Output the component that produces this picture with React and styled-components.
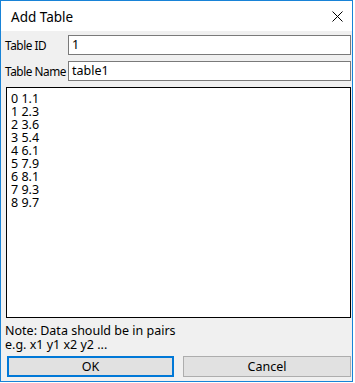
import React from "react";
import styled, { createGlobalStyle } from "styled-components";

const GlobalStyle = createGlobalStyle`
  html, body {
    margin: 0;
    padding: 0;
    background: #ffffff;
  }
  body {
    font-family: "Segoe UI", "Noto Sans", "Liberation Sans", sans-serif;
    font-size: 12.5px;
    color: #000000;
  }
`;

const Window = styled.div`
  width: 353px;
  height: 382px;
  box-sizing: border-box;
  border: 1px solid #1883d7;
  background: #f0f0f0;
  display: flex;
  flex-direction: column;
`;

const TitleBar = styled.div`
  height: 30px;
  flex: none;
  background: #ffffff;
  display: flex;
  align-items: center;
  justify-content: space-between;
  padding: 0 7px 0 10px;
`;

const Title = styled.span`
  font-size: 13.5px;
  line-height: 16px;
  padding-top: 1px;
`;

const CloseButton = styled.div`
  width: 12px;
  height: 12px;
  display: flex;
  align-items: center;
  justify-content: center;
  margin-right: 2px;
`;

const Body = styled.div`
  flex: 1;
  display: flex;
  flex-direction: column;
  padding: 4px 1px 0 4px;
`;

const FieldRow = styled.div`
  display: flex;
  align-items: center;
  height: 20px;
  margin-bottom: 6px;
`;

const Label = styled.label`
  width: 63px;
  flex: none;
  font-size: 11.8px;
  line-height: 14px;
  white-space: nowrap;
  letter-spacing: -0.45px;
`;

const Input = styled.div`
  flex: 1;
  height: 20px;
  box-sizing: border-box;
  border: 1px solid #7a7a7a;
  background: #ffffff;
  padding: 0 3px;
  line-height: 18px;
`;

const DataArea = styled.div`
  margin-left: 1px;
  height: 231px;
  box-sizing: border-box;
  border: 1px solid #000000;
  background: #ffffff;
  padding: 4px 4px;
  line-height: 13px;
  white-space: pre;
`;

const Note = styled.div`
  margin-top: 6px;
  display: flex;
  flex-direction: column;
`;

const NoteLine = styled.div`
  line-height: 14px;
  height: 14px;
`;

const ButtonRow = styled.div`
  display: flex;
  gap: 9px;
  margin-top: 4px;
  padding-left: 2px;
  padding-right: 1px;
`;

const Button = styled.div`
  flex: none;
  width: ${p => p.$width}px;
  height: 21px;
  box-sizing: border-box;
  background: #e1e1e1;
  border: ${p => (p.$primary ? "2px solid #0078d7" : "1px solid #adadad")};
  display: flex;
  align-items: center;
  justify-content: center;
`;

const rows = [
  "0 1.1",
  "1 2.3",
  "2 3.6",
  "3 5.4",
  "4 6.1",
  "5 7.9",
  "6 8.1",
  "7 9.3",
  "8 9.7"
];

const App = () => {
  return (
    <>
      <GlobalStyle />
      <Window>
        <TitleBar>
          <Title>Add Table</Title>
          <CloseButton>
            <svg width="11" height="11" viewBox="0 0 11 11">
              <path d="M0.5 0.5 L10.5 10.5 M10.5 0.5 L0.5 10.5" stroke="#000" strokeWidth="1" />
            </svg>
          </CloseButton>
        </TitleBar>
        <Body>
          <FieldRow>
            <Label>Table ID</Label>
            <Input>1</Input>
          </FieldRow>
          <FieldRow>
            <Label>Table Name</Label>
            <Input>table1</Input>
          </FieldRow>
          <DataArea>{rows.join("\n")}</DataArea>
          <Note>
            <NoteLine>Note: Data should be in pairs</NoteLine>
            <NoteLine>e.g. x1 y1 x2 y2 ...</NoteLine>
          </Note>
          <ButtonRow>
            <Button $primary $width={167}>OK</Button>
            <Button $width={168}>Cancel</Button>
          </ButtonRow>
        </Body>
      </Window>
    </>
  );
};

export default App;
